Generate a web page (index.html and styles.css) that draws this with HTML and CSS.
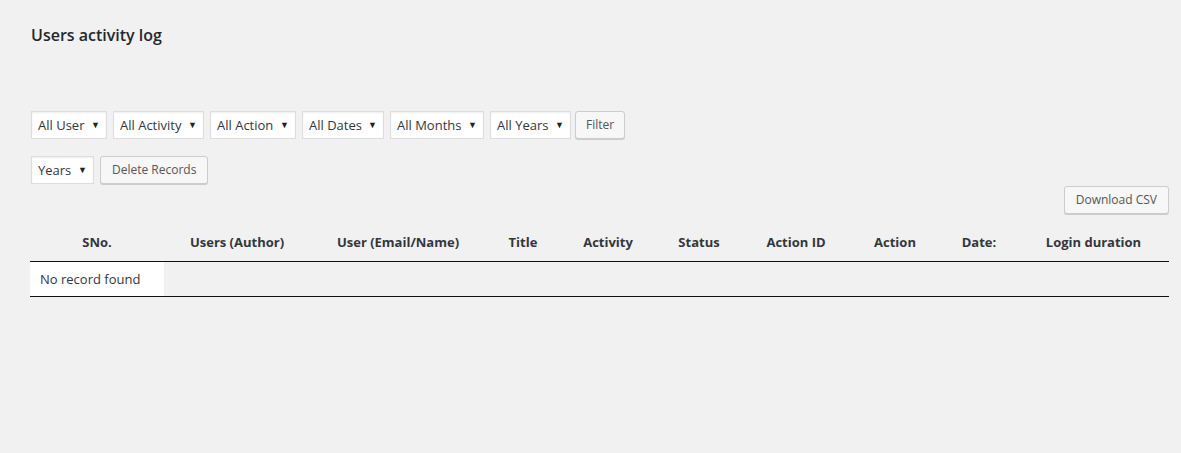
FILE: index.html
```html
<!DOCTYPE html>
<html lang="en">
<head>
    <meta charset="UTF-8">
    <title>Users activity log</title>
    <link rel="stylesheet" href="styles.css">
</head>
<body>
    <div class="wrap">
        <h1>Users activity log</h1>

        <form class="filters">
            <div class="filter-row">
                <span class="select"><select><option>All User</option></select></span>
                <span class="select"><select><option>All Activity</option></select></span>
                <span class="select"><select><option>All Action</option></select></span>
                <span class="select"><select><option>All Dates</option></select></span>
                <span class="select"><select><option>All Months</option></select></span>
                <span class="select"><select><option>All Years</option></select></span>
                <button type="button" class="button btn-filter">Filter</button>
            </div>

            <div class="filter-row">
                <span class="select"><select><option>Years</option></select></span>
                <button type="button" class="button">Delete Records</button>
            </div>
        </form>

        <div class="table-actions">
            <button type="button" class="button">Download CSV</button>
        </div>

        <table class="log-table">
            <thead>
                <tr>
                    <th class="col-sno">SNo.</th>
                    <th class="col-author">Users (Author)</th>
                    <th class="col-user">User (Email/Name)</th>
                    <th class="col-title">Title</th>
                    <th class="col-activity">Activity</th>
                    <th class="col-status">Status</th>
                    <th class="col-actionid">Action ID</th>
                    <th class="col-action">Action</th>
                    <th class="col-date">Date:</th>
                    <th class="col-duration">Login duration</th>
                </tr>
            </thead>
            <tbody>
                <tr>
                    <td class="empty">No record found</td>
                    <td class="blank" colspan="9"></td>
                </tr>
            </tbody>
        </table>
    </div>
</body>
</html>
```

FILE: styles.css
```css
* {
    box-sizing: border-box;
    margin: 0;
    padding: 0;
}

body {
    background: #f1f1f1;
    color: #32373c;
    font-family: 'Open Sans', 'Noto Sans', sans-serif;
    font-size: 13px;
}

.wrap {
    padding: 23px 12px 0 30px;
}

h1 {
    font-size: 16px;
    font-weight: 600;
    color: #23282d;
    line-height: 24px;
    margin-left: 1px;
    margin-bottom: 64px;
}

.filter-row {
    display: flex;
    align-items: center;
    gap: 6px;
    margin-left: 1px;
    margin-bottom: 17px;
}

.select {
    position: relative;
    display: inline-block;
}

.select select {
    appearance: none;
    -webkit-appearance: none;
    height: 28px;
    padding: 0 21px 0 6px;
    border: 1px solid #ddd;
    background: #fff;
    box-shadow: inset 0 1px 2px rgba(0, 0, 0, 0.07);
    font-family: inherit;
    font-size: 13px;
    color: #32373c;
}

.select::after {
    content: "\25BC";
    position: absolute;
    right: 7px;
    top: 7px;
    font-size: 9px;
    color: #222;
    pointer-events: none;
}

.button {
    height: 28px;
    padding: 0 11px 2px;
    border: 1px solid #ccc;
    border-radius: 3px;
    background: #f7f7f7;
    box-shadow: 0 1px 0 #ccc;
    color: #555;
    font-family: inherit;
    font-size: 12px;
    cursor: pointer;
}

.btn-filter {
    margin-left: -2px;
    padding: 0 10px 2px;
}

.table-actions {
    display: flex;
    justify-content: flex-end;
    margin-top: -15px;
    margin-bottom: 10px;
}

.log-table {
    width: 100%;
    border-collapse: collapse;
    table-layout: fixed;
}

.log-table th {
    font-size: 13px;
    font-weight: 700;
    color: #32373c;
    text-align: center;
    padding: 8px 4px;
    line-height: 21px;
    border-bottom: 1px solid #111;
}

.log-table td {
    padding: 7px 10px;
    line-height: 20px;
    border-bottom: 1px solid #111;
}

.log-table td.empty {
    background: #fff;
}

.col-sno { width: 134px; }
.col-author { width: 146px; }
.col-user { width: 176px; }
.col-title { width: 74px; }
.col-activity { width: 96px; }
.col-status { width: 86px; }
.col-actionid { width: 108px; }
.col-action { width: 90px; }
.col-date { width: 78px; }
.col-duration { width: 151px; }
```
